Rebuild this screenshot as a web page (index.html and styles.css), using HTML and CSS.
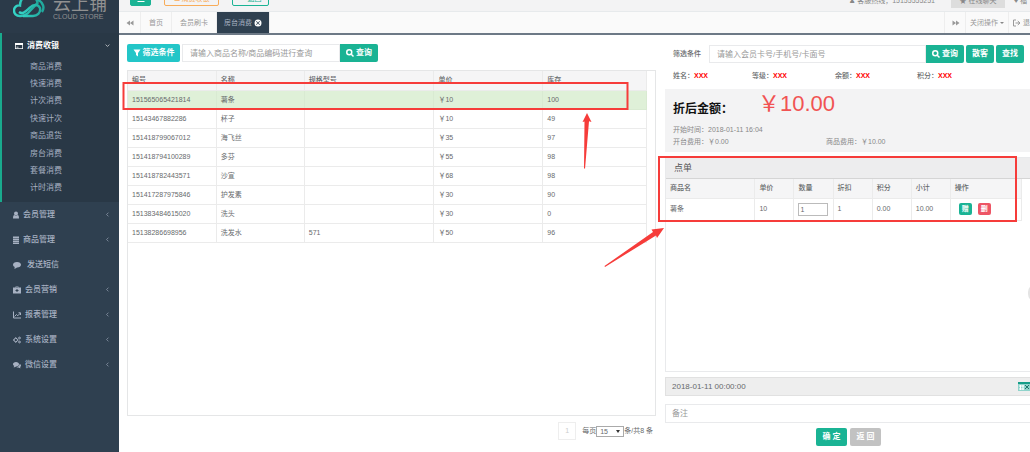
FILE: index.html
```html
<!DOCTYPE html>
<html lang="zh-CN">
<head>
<meta charset="utf-8">
<title>云上铺 - 房台消费</title>
<link rel="stylesheet" href="styles.css">
</head>
<body>
<div class="app">
  <aside class="sidebar">
    <div class="brand">
      <svg class="brand-logo" viewBox="0 0 32 24" aria-hidden="true">
        <defs><linearGradient id="g" x1="0" x2="1"><stop offset="0" stop-color="#35d6c8"/><stop offset="1" stop-color="#1fa79b"/></linearGradient></defs>
        <path d="M7 22C3 22 1 19.500 1 16.500C1 13 4 11 7 11.500C7 5 11 2 16 2C21 2 24 5 24.500 9L15 19C12 22 10 22 7 22Z" fill="none" stroke="url(#g)" stroke-width="2.400"/>
        <path d="M6 18C10 21 13 17 17 13.500C20 10.500 25 9.500 27 14C28 19 24 22 20 22L10 22M25 6C30 8 32 14 29 18" fill="none" stroke="url(#g)" stroke-width="2.400"/>
      </svg>
      <div class="brand-name"><span class="brand-cn">云上铺</span><span class="brand-en">CLOUD STORE</span></div>
    </div>
    <nav>
      <section class="open-group">
        <a class="menu-item current" href="#"><svg class="icon" viewBox="0 0 16 16"><path fill-rule="evenodd" d="M0 2h16v12H0zM1.500 6v6.500h13V6zM3 9.500h4V11H3z"/></svg><span>消费收银</span><svg class="caret" viewBox="0 0 8 8"><path d="M1 2.500l3 3 3-3"/></svg></a>
        <div class="submenu">
          <a href="#">商品消费</a><a href="#">快速消费</a><a href="#">计次消费</a><a href="#">快速计次</a><a href="#">商品退货</a><a href="#">房台消费</a><a href="#">套餐消费</a><a href="#">计时消费</a>
        </div>
      </section>
      <a class="menu-item" href="#"><svg class="icon slim" viewBox="0 0 12 16"><circle cx="6" cy="5" r="4"/><path d="M0 15c0-5 1-7 3-7 2 2 4 2 6 0 2 0 3 2 3 7z"/></svg><span>会员管理</span><svg class="caret" viewBox="0 0 8 8"><path d="M5.500 1l-3 3 3 3"/></svg></a>
      <a class="menu-item" href="#"><svg class="icon slim" viewBox="0 0 12 16"><path d="M0 1h12v3H0zM0 5h12v3H0zM0 9h12v3H0zM0 13h12v3H0z"/></svg><span>商品管理</span><svg class="caret" viewBox="0 0 8 8"><path d="M5.500 1l-3 3 3 3"/></svg></a>
      <a class="menu-item spaced" href="#"><svg class="icon" viewBox="0 0 16 16"><path d="M8 2c5 0 8 2.500 8 5.500S13 13 8 13c-2 2-4 2-6 2 1-1 1.500-2 1.500-3C1 11 0 9 0 7.500 0 4.500 3 2 8 2z"/></svg><span>发送短信</span></a>
      <a class="menu-item" href="#"><svg class="icon" viewBox="0 0 16 16"><path fill-rule="evenodd" d="M5 3V1h6v2h5v12H0V3zM6.500 3h3v-.8h-3zM7 6v2H5v2h2v2h2v-2h2V8H9V6z"/></svg><span>会员营销</span><svg class="caret" viewBox="0 0 8 8"><path d="M5.500 1l-3 3 3 3"/></svg></a>
      <a class="menu-item" href="#"><svg class="icon line" viewBox="0 0 16 16"><path d="M1 1v13h15M3 11l4-4 2.500 2.500L15 4M11 3.500h4V8"/></svg><span>报表管理</span><svg class="caret" viewBox="0 0 8 8"><path d="M5.500 1l-3 3 3 3"/></svg></a>
      <a class="menu-item" href="#"><svg class="icon line" viewBox="0 0 16 16"><circle cx="5.500" cy="8" r="3.500"/><circle cx="13" cy="4" r="1.800"/><circle cx="13" cy="12" r="1.800"/><path d="M5.500 2.500v2M5.500 11.500v2M0 8h2M9 8h2"/></svg><span>系统设置</span><svg class="caret" viewBox="0 0 8 8"><path d="M5.500 1l-3 3 3 3"/></svg></a>
      <a class="menu-item" href="#"><svg class="icon" viewBox="0 0 16 16"><path d="M6 2c3.500 0 6 2 6 4.500S9.500 11 6 11c-2 1.500-3 1.500-5 1.500L2.500 10C1 9 0 8 0 6.500 0 4 2.500 2 6 2zM13.300 5.500C15 6.500 16 7.500 16 9s-.8 2.200-2 3l1.300 2.500c-2 0-3-.5-4.500-1.500-2 0-3-.5-4-1.200 4 0 6.500-2.500 6.500-6.300z"/></svg><span>微信设置</span><svg class="caret" viewBox="0 0 8 8"><path d="M5.500 1l-3 3 3 3"/></svg></a>
    </nav>
  </aside>

  <main class="main">
    <header class="topbar">
      <button class="top-btn solid" aria-label="菜单"><svg class="icon" viewBox="0 0 16 16"><path d="M1 2h14v2H1zM1 7h14v2H1zM1 12h14v2H1z"/></svg></button>
      <button class="top-btn orange">☰ 消费收银</button>
      <button class="top-btn green">↶ 返回</button>
      <span class="top-user">♟ 客服热线，15155555251</span>
      <button class="top-btn chat">★ 在线聊天</button>
      <span class="top-more">♥ 福</span>
    </header>
    <div class="tabs">
      <button class="tab arrow" aria-label="向左"><svg class="icon" viewBox="0 0 16 16"><path d="M8 3v10L1 8zM15 3v10L8 8z"/></svg></button>
      <a class="tab" href="#">首页</a>
      <a class="tab" href="#">会员刷卡</a>
      <a class="tab active" href="#">房台消费 <svg class="icon" viewBox="0 0 16 16"><path fill-rule="evenodd" d="M8 1a7 7 0 100 14A7 7 0 008 1zM5 4l3 3 3-3 1 1-3 3 3 3-1 1-3-3-3 3-1-1 3-3-3-3z"/></svg></a>
      <button class="tab arrow push" aria-label="向右"><svg class="icon" viewBox="0 0 16 16"><path d="M1 3v10l7-5zM8 3v10l7-5z"/></svg></button>
      <button class="tab close">关闭操作<i class="drop"></i></button>
      <a class="tab exit" href="#"><svg class="icon line" viewBox="0 0 16 16"><path d="M6 2H1v12h5M5 8h8M9.500 4l4.500 4-4.500 4"/></svg>退</a>
    </div>

    <div class="content">
      <section class="goods">
        <form class="search">
          <button type="button" class="btn cyan"><svg class="icon" viewBox="0 0 16 16"><path d="M1 1h14L10 8v7l-4-3V8z"/></svg>筛选条件</button>
          <input class="field" aria-label="商品查询" placeholder="请输入商品名称/商品编码进行查询">
          <button type="button" class="btn query"><svg class="icon thick" viewBox="0 0 16 16"><circle cx="6.500" cy="6.500" r="5"/><path d="M10.500 10.500L15 15"/></svg>查询</button>
        </form>
        <div class="goods-box">
          <table class="grid">
            <colgroup><col class="c-code"><col class="c-name"><col class="c-spec"><col class="c-price"><col class="c-stock"></colgroup>
            <thead><tr><th>编号</th><th>名称</th><th>规格型号</th><th>单价</th><th>库存</th></tr></thead>
            <tbody>
              <tr class="selected"><td>151565065421814</td><td>薯条</td><td></td><td>￥10</td><td>100</td></tr>
              <tr><td>15143467882286</td><td>杯子</td><td></td><td>￥10</td><td>49</td></tr>
              <tr><td>151418799067012</td><td>海飞丝</td><td></td><td>￥35</td><td>97</td></tr>
              <tr><td>151418794100289</td><td>多芬</td><td></td><td>￥55</td><td>98</td></tr>
              <tr><td>151418782443571</td><td>沙宣</td><td></td><td>￥68</td><td>98</td></tr>
              <tr><td>151417287975846</td><td>护发素</td><td></td><td>￥30</td><td>90</td></tr>
              <tr><td>151383484615020</td><td>洗头</td><td></td><td>￥30</td><td>0</td></tr>
              <tr><td>15138286698956</td><td>洗发水</td><td>571</td><td>￥50</td><td>96</td></tr>
            </tbody>
          </table>
        </div>
        <div class="pager">
          <button class="page">1</button>
          <label for="size">每页</label>
          <span class="select"><select id="size"><option>15</option></select><i class="drop"></i></span>
          <span>条/共8 条</span>
        </div>
      </section>

      <section class="order">
        <form class="search member">
          <label for="member">筛选条件</label>
          <input id="member" class="field" placeholder="请输入会员卡号/手机号/卡面号">
          <button type="button" class="btn query"><svg class="icon thick" viewBox="0 0 16 16"><circle cx="6.500" cy="6.500" r="5"/><path d="M10.500 10.500L15 15"/></svg>查询</button>
          <button type="button" class="btn">散客</button>
          <button type="button" class="btn">查找</button>
        </form>
        <div class="facts"><span>姓名：<b>XXX</b></span><span>等级：<b>XXX</b></span><span>余额：<b>XXX</b></span><span>积分：<b>XXX</b></span></div>
        <div class="totals">
          <div class="total"><strong>折后金额：</strong><span class="amount">￥10.00</span></div>
          <div class="line-row">开始时间：2018-01-11 16:04</div>
          <div class="line-row fees"><span>开台费用：￥0.00</span><span>商品费用：￥10.00</span></div>
        </div>
        <div class="list">
          <h2>点单</h2>
          <table class="items">
            <colgroup><col class="i-name"><col class="i-num"><col class="i-num"><col class="i-num"><col class="i-num"><col class="i-num"><col></colgroup>
            <thead><tr><th>商品名</th><th>单价</th><th>数量</th><th>折扣</th><th>积分</th><th>小计</th><th>操作</th></tr></thead>
            <tbody><tr><td>薯条</td><td>10</td><td><input class="qty" aria-label="数量" value="1"></td><td>1</td><td>0.00</td><td>10.00</td><td class="ops"><button class="mini">赠</button><button class="mini del">删</button></td></tr></tbody>
          </table>
        </div>
        <div class="date"><input aria-label="日期" value="2018-01-11 00:00:00" readonly><svg class="calendar" viewBox="0 0 12 9"><path d="M0 0h12v9H0z" fill="#8fd3cb"/><path d="M0 0h12v2H0z" fill="#159d88"/><path d="M1 4h5M1 7h5M2.500 3v5M5 3v5" stroke="#fff"/><path d="M7 3l4 4M11 3L7 7" stroke="#20756b"/></svg></div>
        <input class="note" aria-label="备注" placeholder="备注">
        <div class="actions"><button class="btn">确 定</button><button class="btn gray">返 回</button></div>
      </section>
    </div>
  </main>
  <svg class="marks" viewBox="0 0 1030 452" aria-hidden="true">
    <path d="M123.500 83h504v26h-504zM659 157h357v64H659z" fill="none" stroke="#f63c3a" stroke-width="2"/>
    <path d="M587 113l4.500 9-2.500-.8L585 169l-1-1 .5-46.500-2 .5zM664 228l-7 10-1-2.600L605 267l-.5-1L653 232l-1.500-2.500z" fill="#f63c3a"/>
  </svg>
  <div class="float-handle"></div>
</div>
</body>
</html>
```

FILE: styles.css
```css
* { box-sizing: border-box; }
body { margin: 0; font: 7px/10px "Liberation Sans", "Noto Sans CJK SC", sans-serif; color: #676a6c; background: #fff; overflow: hidden; }
button, input, select { font: inherit; color: inherit; margin: 0; padding: 0; border: 0; background: none; }
a { color: inherit; text-decoration: none; }
svg { display: block; flex: none; }
.app { position: relative; display: flex; height: 100vh; overflow: hidden; }
.icon { width: 8px; height: 8px; fill: currentColor; }
.icon.slim { width: 6px; }
.icon.line, .icon.thick { fill: none; stroke: currentColor; stroke-width: 2; }
.icon.thick { stroke-width: 3; }

.sidebar { flex: none; width: 119px; background: #2f4050; color: #a7b1c2; }
.brand { display: flex; align-items: flex-end; gap: 8px; height: 33px; padding: 0 0 12px 13px; background: #2b3a49; overflow: hidden; }
.brand-logo { width: 32px; height: 24px; margin-bottom: 3px; }
.brand-name { display: flex; flex-direction: column; color: #919191; }
.brand-cn { font-size: 18px; line-height: 18px; }
.brand-en { font-size: 7px; line-height: 8px; white-space: nowrap; }
.open-group { background: #293846; border-left: 2px solid #19aa8d; padding-bottom: 5px; }
.menu-item { display: flex; align-items: center; gap: 4px; height: 25px; padding: 0 9px 0 13px; font-size: 8px; font-weight: 500; }
.menu-item.current { color: #fff; font-weight: bold; }
.menu-item.spaced { gap: 6px; }
.caret { width: 5px; height: 5px; margin-left: auto; fill: none; stroke: currentColor; stroke-width: 1; }
.submenu { display: grid; grid-auto-rows: 1fr; min-height: 139px; font-size: 8px; }
.submenu a { display: flex; align-items: center; padding-left: 28px; }

.main { flex: 1; min-width: 0; display: flex; flex-direction: column; }
.topbar { display: flex; align-items: flex-end; height: 12px; padding: 0 0 5px 11px; background: #f3f3f4; border-bottom: 1px solid #e7eaec; color: #888; white-space: nowrap; }
.top-btn { display: flex; align-items: center; justify-content: center; flex: none; height: 14px; border: 1px solid; border-radius: 2px; padding: 0 6px; }
.top-btn.solid { width: 21px; background: #1ab394; border-color: #1ab394; color: #fff; }
.top-btn.orange { width: 55px; margin-left: 13px; color: #f8ac59; }
.top-btn.green { width: 37px; margin-left: 13px; color: #1ab394; }
.top-user { margin-left: auto; }
.top-btn.chat { width: 54px; margin: 0 9px -2px 16px; background: #ddd; border-color: #ddd; border-radius: 0; }
.top-more { width: 16px; }
.tabs { display: flex; height: 23px; border-bottom: 2px solid #6d7986; background: #fafafa; color: #999; }
.tab { display: flex; align-items: center; gap: 2px; flex: none; padding: 0 8px; border-right: 1px solid #eee; white-space: nowrap; }
.tab.arrow { width: 22px; padding: 0 7px; }
.tab.active { background: #2f4050; color: #a7b1c2; padding: 0 7px; }
.tab.active .icon { color: #fff; }
.tab.push { margin-left: auto; border-left: 1px solid #eee; }
.tab.close { padding: 0 4px; }
.tab.exit { padding: 0 0 0 4px; border: 0; }
.drop { border: 2px solid transparent; border-top-color: #888; border-bottom: 0; }

.content { flex: 1; display: flex; gap: 9px; padding: 9px 0 6px 8px; min-height: 0; }
.goods { flex: 529; min-width: 0; display: flex; flex-direction: column; }
.search { display: flex; align-items: center; height: 18px; }
.btn { display: flex; align-items: center; justify-content: center; gap: 2px; flex: none; height: 18px; padding: 0 6px; border-radius: 2px; background: #1ab394; color: #fff; font-size: 8px; font-weight: bold; white-space: nowrap; }
.btn.cyan { width: 53px; margin-right: 2px; padding: 0; background: #23c6c8; }
.btn.query { width: 38px; padding: 0; border-radius: 0 2px 2px 0; }
.btn.gray { background: #c2c2c2; }
.field { width: 158px; height: 18px; border: 1px solid #e9eaec; padding: 0 7px; font-size: 8px; }
::placeholder { color: #999; opacity: 1; }
.goods-box { flex: 1; margin-top: 8px; border: 1px solid #e5e6e7; padding-right: 8px; }
table { width: 100%; border-collapse: collapse; table-layout: fixed; }
th, td { padding: 0 4px; text-align: left; border: 1px solid #ebebeb; white-space: nowrap; overflow: hidden; }
th { background: #f5f5f6; }
.grid th, .grid td { height: 19px; }
.grid th { font-weight: 500; }
.grid tr > :first-child { border-left: 0; }
.grid thead th { border-top: 0; }
.selected td { background: #dff0d8; border-color: #d9ead2; }
.c-code { width: 17%; } .c-name { width: 17%; } .c-spec { width: 25%; } .c-price { width: 21%; } .c-stock { width: 20%; }
.pager { display: flex; align-items: center; justify-content: flex-end; height: 18px; margin: 6px 3px 6px 0; }
.page { width: 18px; height: 18px; margin-right: 6px; border: 1px solid #eee; color: #ccc; }
.select { display: grid; grid-template-columns: 1fr 7px; align-items: center; width: 28px; height: 11px; border: 1px solid #aaa; background: #fff; }
.select select { grid-area: 1 / 1 / 2 / 3; appearance: none; padding-left: 3px; line-height: 9px; }
.select .drop { grid-area: 1 / 2; justify-self: start; border-top: 3px solid #333; pointer-events: none; }

.order { flex: 365; min-width: 0; display: flex; flex-direction: column; }
.member { gap: 2px; padding: 0 6px 0 8px; margin-top: 1px; }
.member label { font-weight: 500; width: 34px; }
.member .field { flex: 1; min-width: 0; margin-right: -2px; }
.facts { display: grid; grid-template-columns: 79px 83px 82px 1fr; padding: 8px 8px 0; font-weight: 500; }
.facts b { color: #f00; font-weight: bold; }
.totals { margin-top: 8px; padding: 3px 8px 4px; background: #f3f3f4; color: #888; }
.total { display: flex; align-items: center; height: 32px; color: #111; }
.total strong { width: 85px; padding-top: 2px; font-size: 12px; line-height: 16px; }
.amount { font-size: 22px; line-height: 24px; padding-bottom: 8px; color: #f15353; }
.line-row { line-height: 12px; }
.fees { display: grid; grid-template-columns: 153px 1fr; }
.list { flex: 1; margin-top: 5px; border: 1px solid #e9eaec; border-right: 0; }
.list h2 { margin: 0; padding: 0 8px; font-size: 9px; font-weight: normal; line-height: 20px; color: #555; background: #ededee; border-bottom: 1px solid #d5d5d5; }
.items { width: calc(100% - 8px); }
.items th { height: 19px; font-weight: 500; }
.items td { height: 22px; }
.items tr > * { border-top: 0; }
.items tr > :first-child { border-left: 0; }
.i-name { width: 25%; } .i-num { width: 11%; }
.qty { width: 30px; height: 13px; border: 1px solid #bbb; padding: 0 1px; display: block; }
.items .ops { padding-left: 8px; }
.mini { width: 13px; height: 12px; margin-right: 6px; border-radius: 2px; background: #1ab394; color: #fff; line-height: 12px; font-weight: bold; }
.mini.del { background: #ed5565; margin: 0; }
.date { display: flex; align-items: center; height: 19px; margin-top: 5px; border: 1px solid #e1e1e1; border-right: 0; background: #eee; }
.date input { flex: 1; padding: 0 6px; font-size: 8px; }
.calendar { width: 12px; height: 9px; }
.note { height: 19px; margin-top: 8px; border: 1px solid #e9eaec; border-right: 0; padding: 0 6px; font-size: 8px; }
.actions { display: flex; justify-content: center; gap: 3px; padding-left: 2px; margin-top: 5px; }
.actions .btn { width: 31px; padding: 0; }

.marks { position: absolute; left: 0; top: 0; width: 1030px; height: 452px; pointer-events: none; }
.float-handle { position: absolute; right: -14px; top: 284px; width: 16px; height: 18px; border-radius: 9px; background: #e4e4e4; }
```
